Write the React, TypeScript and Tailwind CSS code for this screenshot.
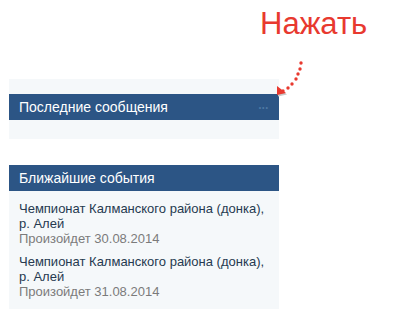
export default function App() {
  const events = [
    { title: 'Чемпионат Калманского района (донка), р. Алей', date: 'Произойдет 30.08.2014' },
    { title: 'Чемпионат Калманского района (донка), р. Алей', date: 'Произойдет 31.08.2014' },
  ];

  return (
    <div className="relative w-[404px] h-[334px] bg-white font-['Liberation_Sans',Arial,sans-serif]">
      <div className="h-[79px] pl-[260px] pt-[8px]">
        <span className="text-[31px] leading-[31px] text-[#e8392f]">Нажать</span>
      </div>

      <div className="ml-[9px] w-[270px] bg-[#f5f8fa] pt-[15px] pb-[19px]">
        <div className="flex h-[26px] items-center justify-between bg-[#2c5585] pl-[10px] pr-[10px]">
          <span className="text-[14px] text-white">Последние сообщения</span>
          <span className="text-[7px] leading-none tracking-[1px] text-[#4f7aa6]">•••</span>
        </div>
      </div>

      <div className="ml-[9px] mt-[26px] w-[270px] bg-[#f5f8fa] pb-[10px]">
        <div className="flex h-[26px] items-center bg-[#2c5585] pl-[10px]">
          <span className="text-[14px] text-white">Ближайшие события</span>
        </div>
        <div className="flex flex-col gap-[8px] px-[10px] pt-[10px]">
          {events.map((e, i) => (
            <div key={i} className="text-[13px] leading-[15px]">
              <div className="text-[#263a50]">{e.title}</div>
              <div className="text-[#7b7b7b]">{e.date}</div>
            </div>
          ))}
        </div>
      </div>

      <svg className="absolute left-[270px] top-[58px]" width="40" height="45" viewBox="0 0 40 45">
        <path d="M8 29.5 L8 38.5 L17 36.5 Z" fill="#c9c9c9" />
        <g fill="#e8392f">
          <circle cx="31" cy="5" r="1.7" />
          <circle cx="30" cy="11" r="1.7" />
          <circle cx="28" cy="16" r="1.7" />
          <circle cx="26" cy="21" r="1.7" />
          <circle cx="22" cy="26" r="1.7" />
          <circle cx="18" cy="30" r="1.7" />
          <circle cx="13" cy="33" r="1.7" />
          <path d="M7 28 L7 37 L16 35 Z" />
        </g>
      </svg>
    </div>
  );
}
